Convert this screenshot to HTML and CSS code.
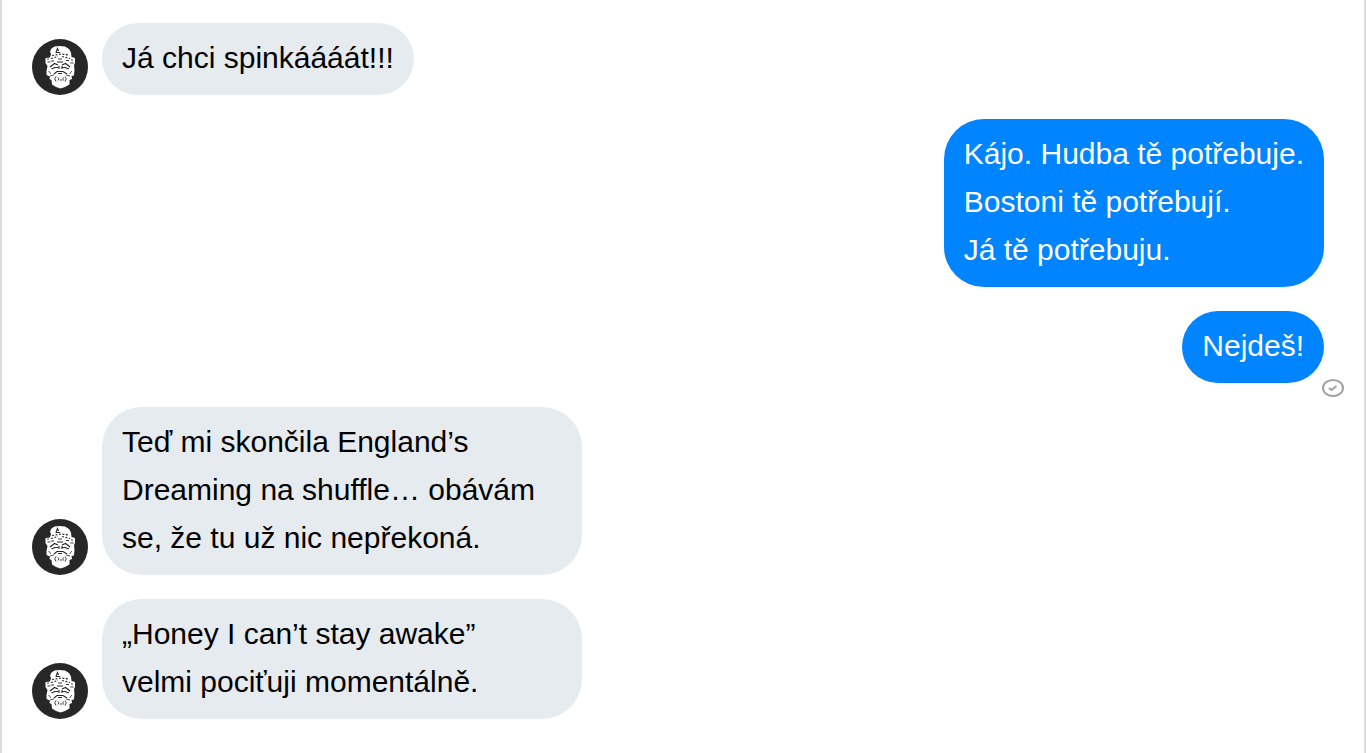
FILE: index.html
```
<!DOCTYPE html>
<html lang="cs">
  <head>
    <meta charset="UTF-8">
    <title>Chat</title>
    <link rel="stylesheet" href="styles.css">
  </head>
  <body>
    <!-- shared avatar drawing -->
    <svg class="sprite" aria-hidden="true">
      <symbol id="avatar" viewBox="0 0 56 56">
        <circle cx="28" cy="28" r="28" fill="#272727"/>
        <path fill="#fff" d="M19 15 L18 12.500 L19.500 9.500 L22.500 7.500 L27 7 L33 7.500 L37 10 L39 13.500 L39.500 18 L43 19 L43 24 L42 26 L42.500 31 L42 36.500 L39.500 37 L40 40 L37.500 41 L37.500 45.500 L33 48 L28.500 49.500 L24 48 L20 45.500 L19.500 41 L17.500 40 L18 37.500 L14.500 36 L14.500 32 L15.500 27 L13.500 24 L13.500 19 L18 18.500 Z"/>
        <g fill="none" stroke="#272727" stroke-width="1.100">
          <path d="M24 13.500 L25.500 9.500 L26.500 12 M23.500 13.500 H28"/>
          <path d="M20 16.500 L29 15 L37 16 M19 19.500 L26 17.500 M30 17.500 L38 19.500" stroke-dasharray="2 1.500"/>
          <path d="M15 20 h2 M15.500 23 h3 M39 21 h2 M38.500 24 h3 M19 22 h3 M34 21.500 h3 M26 20 h4" stroke-width=".9"/>
          <path d="M18 28 L22.500 24.500 L26 26 M30 26 L33.500 24.500 L38 28 M19.500 30 L23 28.500 H26.500 M30 28.500 H33 L37 30"/>
          <path d="M25 23 h6 M27 27 v3 M30 27 v3 M22 35 L25 32.500 H31 L35 35 M26 34.500 h4"/>
          <path d="M16.500 32 l2.500 3 M40 32 l-2.500 3 M18 37 l4 -1 M38 37 l-4 -1" stroke-width=".8"/>
          <path d="M24 37.500 q-2.500 2 0 5 M26 38.500 q1.500 1 0 3 M28 41 h2 M31.500 38.500 q-1.500 1 0 3 M33 37.500 q2.500 2 0 5" stroke-width=".9"/>
        </g>
      </symbol>
    </svg>

    <main class="chat">
      <div class="message received">
        <svg class="avatar" role="img" aria-label="Avatar"><use href="#avatar"/></svg>
        <div class="bubble">Já chci spinkáááát!!!</div>
      </div>

      <div class="message sent">
        <div class="bubble">
          Kájo. Hudba tě potřebuje.<br>
          Bostoni tě potřebují.<br>
          Já tě potřebuju.
        </div>
      </div>

      <div class="message sent">
        <div class="bubble">Nejdeš!</div>
        <svg class="status" viewBox="0 0 22 18" role="img" aria-label="Odesláno">
          <ellipse cx="11" cy="9" rx="10" ry="8"/>
          <path d="M7 9 l2.500 2 l5 -4"/>
        </svg>
      </div>

      <div class="message received">
        <svg class="avatar" role="img" aria-label="Avatar"><use href="#avatar"/></svg>
        <div class="bubble">Teď mi skončila England’s Dreaming na shuffle… obávám se, že tu už nic nepřekoná.</div>
      </div>

      <div class="message received">
        <svg class="avatar" role="img" aria-label="Avatar"><use href="#avatar"/></svg>
        <div class="bubble">„Honey I can’t stay awake” velmi&nbsp;pociťuji momentálně.</div>
      </div>
    </main>
  </body>
</html>
```

FILE: styles.css
```
* {
  box-sizing: border-box;
}
body {
  margin: 0;
  background: #fff;
  color: #000;
  font-family: "Liberation Sans", Arial, sans-serif;
  font-size: 30px;
  line-height: 48px;
}
.sprite {
  display: none;
}
.chat {
  display: flex;
  flex-direction: column;
  gap: 24px;
  min-height: 100vh;
  padding: 23px 40px 24px 30px;
  border-left: 2px solid #ddd;
  border-right: 2px solid #ddd;
}
.message {
  display: flex;
  align-items: flex-end;
  gap: 14px;
  position: relative;
}
.sent {
  justify-content: flex-end;
}
.avatar {
  flex: none;
  width: 56px;
  height: 56px;
}
.bubble {
  max-width: 480px;
  padding: 11px 20px 13px;
  border-radius: 40px;
  background: #e6ebef;
}
.sent .bubble {
  background: #0084ff;
  color: #fff;
}
/* delivery tick hangs off the corner of the bubble */
.status {
  position: absolute;
  right: -20px;
  bottom: -14px;
  width: 22px;
  height: 18px;
  fill: none;
  stroke: #a0a0a0;
  stroke-width: 2;
}
```
